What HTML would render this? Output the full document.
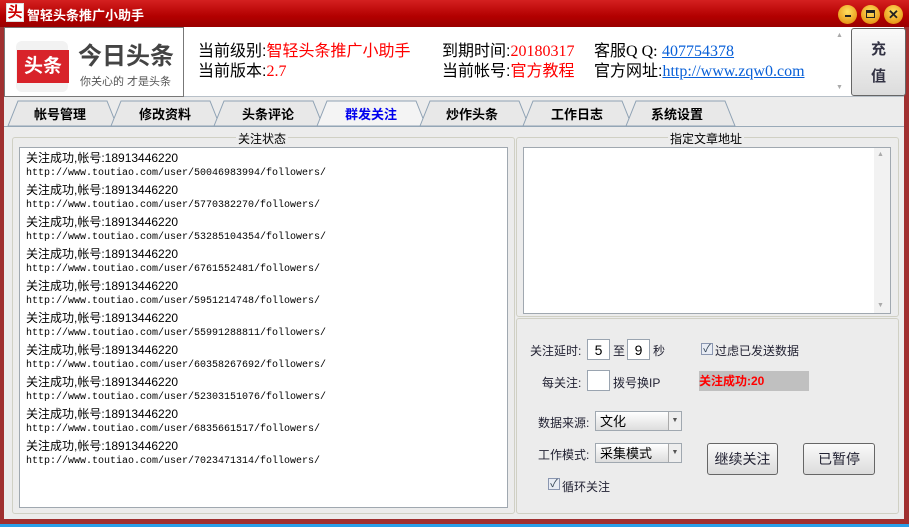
<!DOCTYPE html>
<html><head><meta charset="utf-8"><style>
*{margin:0;padding:0;box-sizing:border-box}
body{width:909px;height:527px;overflow:hidden;background:#ececec;position:relative;font-family:"Liberation Sans","Noto Sans CJK SC",sans-serif;font-size:12px;color:#000}
.a{position:absolute}
.title{left:0;top:0;width:909px;height:27px;background:linear-gradient(#d42020,#b30000 60%,#9a0000)}
.mono{font-family:"Liberation Mono","Noto Sans CJK SC",monospace;font-size:10px}
.log div{height:16px;line-height:16px;white-space:nowrap}
.gb{border:1px solid #d0d0c4;border-radius:3px}
.lbl{font-size:12px;color:#223;white-space:nowrap}
.inp{background:#fff;border:1px solid #9aa4b0;text-align:center;font-size:14px;line-height:20px}
.sel{background:linear-gradient(#fff,#ddd);border:1px solid #a0a8b0;font-size:13px;line-height:19px;padding-left:4px}
.btn{border:1px solid #666;border-radius:3px;background:linear-gradient(#fafafa,#dcdcdc);text-align:center;font-size:14px;line-height:31px;color:#223}
.cb{width:12px;height:12px;border:1px solid #8a96b0;background:#e8ecf4;color:#345;font-size:11px;line-height:10px;text-align:center}
</style></head><body>
<div class="a title"></div>
<div class="a" style="left:6px;top:3px;width:18px;height:19px;background:#fff;border:1px solid #ddd;color:#c00;font-size:15px;font-weight:bold;line-height:17px;text-align:center">头</div>
<div class="a" style="left:27px;top:5px;color:#fff;font-size:13px;font-weight:bold">智轻头条推广小助手</div>
<div class="a" style="left:838px;top:5px;width:19px;height:19px;border-radius:50%;background:radial-gradient(circle at 50% 35%,#ffe060,#e08000)"></div>
<div class="a" style="left:845px;top:15px;width:6px;height:2px;background:#222"></div>
<div class="a" style="left:861px;top:5px;width:19px;height:19px;border-radius:50%;background:radial-gradient(circle at 50% 35%,#ffe060,#e08000)"></div>
<div class="a" style="left:866px;top:10px;width:9px;height:8px;border:1.5px solid #222;border-top-width:3px"></div>
<div class="a" style="left:884px;top:5px;width:19px;height:19px;border-radius:50%;background:radial-gradient(circle at 50% 35%,#ffe060,#e08000);color:#222;font-weight:bold;font-size:13px;line-height:19px;text-align:center">✕</div>
<div class="a" style="left:0;top:27px;width:4px;height:497px;background:#a03030"></div>
<div class="a" style="left:904px;top:27px;width:5px;height:497px;background:#a03030"></div>
<div class="a" style="left:0;top:519px;width:909px;height:5px;background:#a03030"></div>
<div class="a" style="left:0;top:524px;width:909px;height:3px;background:#2aa0e8"></div>
<div class="a" style="left:4px;top:27px;width:900px;height:70px;background:#fff;border-bottom:1px solid #b8c0c8"></div>
<div class="a" style="left:4px;top:27px;width:180px;height:70px;border:1px solid #777"></div>
<div class="a" style="left:16px;top:41px;width:52px;height:51px;border-radius:6px;background:#f2f2f2"></div>
<div class="a" style="left:17px;top:50px;width:52px;height:33px;background:#d8232a;color:#fff;font-size:19px;font-weight:bold;line-height:33px;text-align:center">头条</div>
<div class="a" style="left:78px;top:43px;font-size:24px;font-weight:bold;color:#444;line-height:28px">今日头条</div>
<div class="a" style="left:80px;top:73px;font-size:11px;color:#555">你关心的 才是头条</div>
<div class="a" style="left:198px;top:42px;font-size:16px;line-height:20px;white-space:nowrap">当前级别:<span style="color:#f00">智轻头条推广小助手</span><br>当前版本:<span style="color:#f00;font-family:'Liberation Serif'">2.7</span></div>
<div class="a" style="left:442px;top:42px;font-size:16px;line-height:20px;white-space:nowrap">到期时间:<span style="color:#f00;font-family:'Liberation Serif'">20180317</span><br>当前帐号:<span style="color:#f00">官方教程</span></div>
<div class="a" style="left:594px;top:42px;font-size:16px;line-height:20px;white-space:nowrap">客服<span style="font-family:'Liberation Serif'">Q Q:</span> <span style="color:#0860d8;text-decoration:underline;font-family:'Liberation Serif'">407754378</span><br>官方网址:<span style="color:#0860d8;text-decoration:underline;font-family:'Liberation Serif'">http://www.zqw0.com</span></div>
<div class="a" style="left:836px;top:32px;color:#aaa;font-size:7px">▲</div>
<div class="a" style="left:836px;top:84px;color:#aaa;font-size:7px">▼</div>
<div class="a" style="left:851px;top:28px;width:55px;height:68px;border:1px solid #666;border-radius:3px;background:linear-gradient(#fafafa,#dcdcdc);text-align:center;font-size:15px;font-weight:bold;color:#334;line-height:27px;padding-top:7px">充<br>值</div>
<svg class="a" style="left:0;top:98px" width="909" height="30">
<line x1="4" y1="28.5" x2="904" y2="28.5" stroke="#9aaab8"/>
<g stroke="#8fa2b4" fill="#e8e8e8">
<polygon points="8,28 18,3 107,3 117,28"/>
<polygon points="111,28 121,3 210,3 220,28"/>
<polygon points="214,28 224,3 313,3 323,28"/>
<polygon points="317,28 327,3 416,3 426,28" fill="#f4f4f4"/>
<polygon points="420,28 430,3 519,3 529,28"/>
<polygon points="523,28 533,3 622,3 632,28"/>
<polygon points="626,28 636,3 725,3 735,28"/>
</g>
<g font-size="13" font-weight="bold" text-anchor="middle" font-family="Liberation Sans,Noto Sans CJK SC,sans-serif">
<text x="60" y="21">帐号管理</text><text x="165" y="21">修改资料</text><text x="268" y="21">头条评论</text><text x="371" y="21" fill="#0000ee">群发关注</text><text x="472" y="21">炒作头条</text><text x="577" y="21">工作日志</text><text x="677" y="21">系统设置</text>
</g></svg>
<div class="a gb" style="left:12px;top:137px;width:503px;height:377px"></div>
<div class="a" style="left:236px;top:130px;background:#ececec;padding:0 2px">关注状态</div>
<div class="a log" style="left:19px;top:147px;width:489px;height:361px;background:#fff;border:1px solid #a0a8b0;padding:2px 0 0 6px">
<div>关注成功,帐号:18913446220</div><div class="mono">http://www.toutiao.com/user/50046983994/followers/</div>
<div>关注成功,帐号:18913446220</div><div class="mono">http://www.toutiao.com/user/5770382270/followers/</div>
<div>关注成功,帐号:18913446220</div><div class="mono">http://www.toutiao.com/user/53285104354/followers/</div>
<div>关注成功,帐号:18913446220</div><div class="mono">http://www.toutiao.com/user/6761552481/followers/</div>
<div>关注成功,帐号:18913446220</div><div class="mono">http://www.toutiao.com/user/5951214748/followers/</div>
<div>关注成功,帐号:18913446220</div><div class="mono">http://www.toutiao.com/user/55991288811/followers/</div>
<div>关注成功,帐号:18913446220</div><div class="mono">http://www.toutiao.com/user/60358267692/followers/</div>
<div>关注成功,帐号:18913446220</div><div class="mono">http://www.toutiao.com/user/52303151076/followers/</div>
<div>关注成功,帐号:18913446220</div><div class="mono">http://www.toutiao.com/user/6835661517/followers/</div>
<div>关注成功,帐号:18913446220</div><div class="mono">http://www.toutiao.com/user/7023471314/followers/</div>
</div>
<div class="a gb" style="left:516px;top:137px;width:383px;height:180px"></div>
<div class="a" style="left:668px;top:130px;background:#ececec;padding:0 2px">指定文章地址</div>
<div class="a" style="left:523px;top:147px;width:368px;height:167px;background:#fff;border:1px solid #a0a8b0"></div>
<div class="a" style="left:874px;top:148px;width:16px;height:165px;background:#f2f2f2"></div>
<div class="a" style="left:877px;top:151px;color:#aaa;font-size:7px">▲</div>
<div class="a" style="left:877px;top:302px;color:#aaa;font-size:7px">▼</div>
<div class="a gb" style="left:516px;top:318px;width:383px;height:196px"></div>
<div class="a lbl" style="left:530px;top:342px">关注延时:</div>
<div class="a inp" style="left:587px;top:339px;width:23px;height:21px">5</div>
<div class="a lbl" style="left:613px;top:342px">至</div>
<div class="a inp" style="left:627px;top:339px;width:23px;height:21px">9</div>
<div class="a lbl" style="left:653px;top:342px">秒</div>
<div class="a cb" style="left:701px;top:343px">✓</div>
<div class="a lbl" style="left:715px;top:342px">过虑已发送数据</div>
<div class="a lbl" style="left:542px;top:374px">每关注:</div>
<div class="a inp" style="left:587px;top:370px;width:23px;height:21px"></div>
<div class="a lbl" style="left:613px;top:374px">拨号换IP</div>
<div class="a" style="left:699px;top:371px;width:110px;height:20px;background:#c0c0c0;color:#f00;font-weight:bold;font-size:12px;line-height:20px">关注成功:20</div>
<div class="a lbl" style="left:538px;top:414px">数据来源:</div>
<div class="a sel" style="left:595px;top:411px;width:87px;height:20px">文化</div>
<div class="a" style="left:668px;top:412px;width:13px;height:18px;border-left:1px solid #aaa;background:#eee;color:#555;font-size:7px;text-align:center;line-height:18px">▼</div>
<div class="a lbl" style="left:538px;top:446px">工作模式:</div>
<div class="a sel" style="left:595px;top:443px;width:87px;height:20px">采集模式</div>
<div class="a" style="left:668px;top:444px;width:13px;height:18px;border-left:1px solid #aaa;background:#eee;color:#555;font-size:7px;text-align:center;line-height:18px">▼</div>
<div class="a btn" style="left:707px;top:443px;width:71px;height:32px">继续关注</div>
<div class="a btn" style="left:803px;top:443px;width:72px;height:32px">已暂停</div>
<div class="a cb" style="left:548px;top:478px">✓</div>
<div class="a lbl" style="left:562px;top:478px">循环关注</div>
</body></html>
